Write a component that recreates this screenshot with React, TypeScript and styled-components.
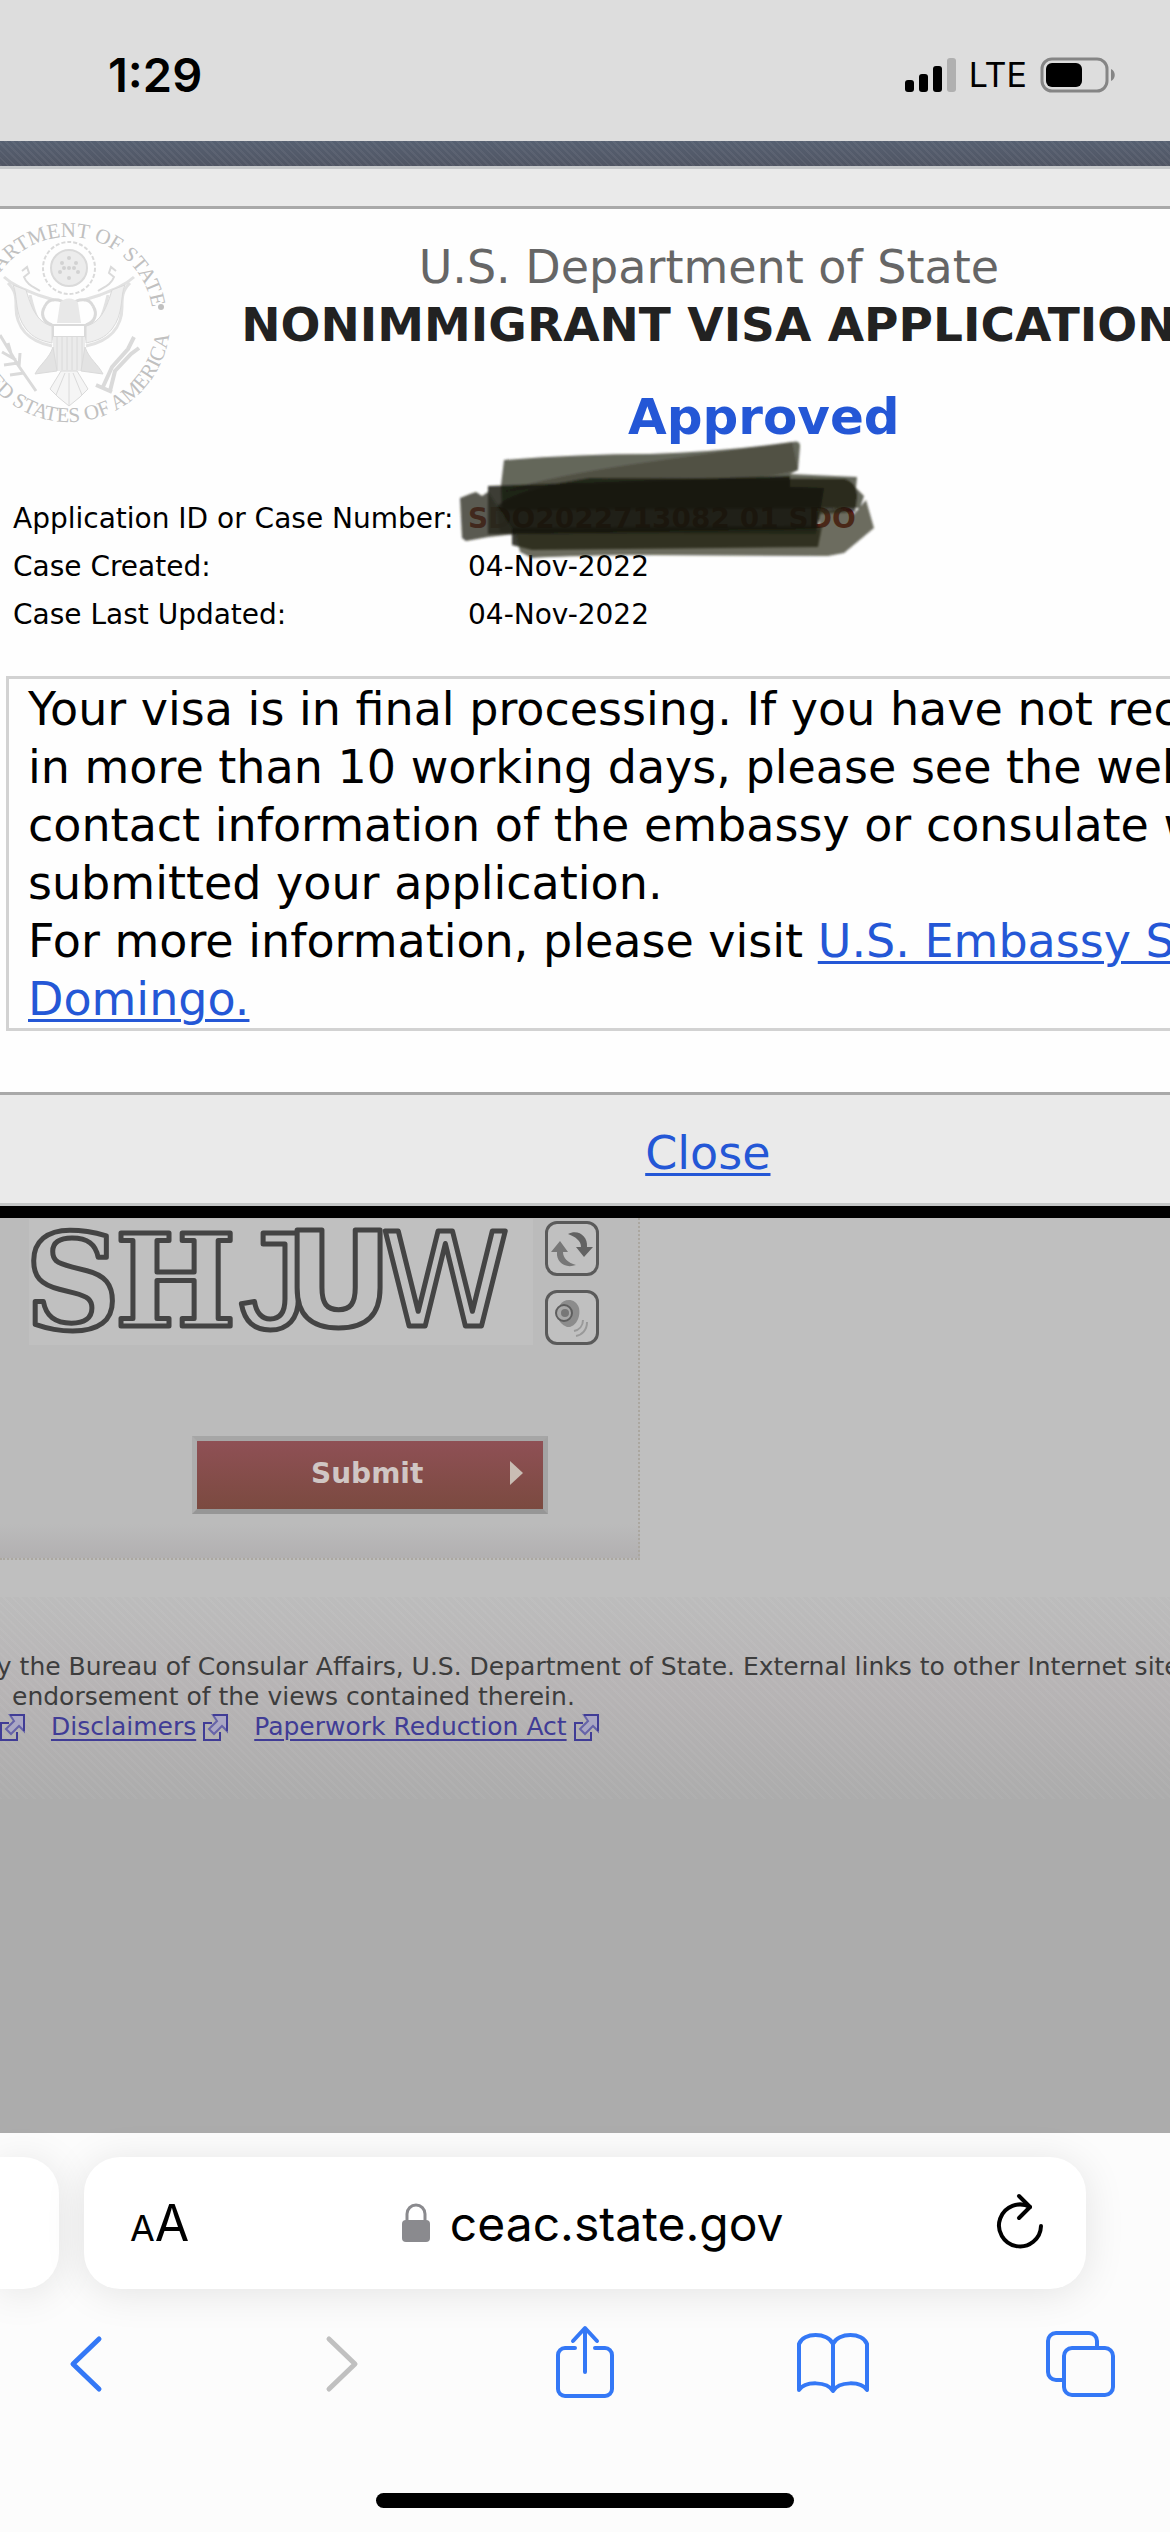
import React from "react";
import styled, { createGlobalStyle } from "styled-components";

const GlobalStyle = createGlobalStyle`
  *, *::before, *::after { box-sizing: border-box; }
  body { margin: 0; background: #acacac; font-family: Verdana, "DejaVu Sans", sans-serif; }
  button { font: inherit; border: 0; padding: 0; background: none; color: inherit; }
`;

const systemFont = `Inter, Roboto, sans-serif`;
const blue = "#2457d6";
const toolBlue = "#3478f6";

const Screen = styled.div`
  min-height: 100vh;
  display: flex;
  flex-direction: column;
  overflow: hidden;
`;

const StatusBar = styled.header`
  display: flex;
  justify-content: space-between;
  align-items: center;
  height: 141px;
  padding: 8px 54px 0 108px;
  background: #dddddd;
  color: #000;
  font-family: ${systemFont};
`;

const Clock = styled.time`
  font-size: 47px;
  font-weight: 600;
`;

const StatusIcons = styled.div`
  display: flex;
  align-items: center;
  gap: 13px;
  font-size: 34px;
`;

const Banner = styled.div`
  height: 25px;
  background:
    repeating-linear-gradient(45deg, rgba(255, 255, 255, 0.05) 0 2px, transparent 2px 5px),
    linear-gradient(#566071, #505563);
`;

const Dialog = styled.section`
  width: 121vw;
  background: #fefefe;
  border-top: 3px solid #c6c8ca;
  border-bottom: 12px solid #000;
`;

const DialogTop = styled.div`
  height: 40px;
  background: #eaeaea;
  border-bottom: 3px solid #a9a9a9;
`;

const DialogBottom = styled.div`
  display: flex;
  justify-content: center;
  align-items: center;
  height: 114px;
  margin-top: 61px;
  padding-top: 8px;
  background: #eaeaea;
  border-top: 3px solid #a9a9a9;
  border-bottom: 3px solid #c4c6c6;
`;

const TextLink = styled.a`
  color: ${blue};
  font-size: ${(p: { $size?: number }) => (p.$size ? p.$size + "px" : "inherit")};
  text-decoration: underline;
  text-decoration-thickness: 3px;
  text-underline-offset: 4px;
`;

const Masthead = styled.div`
  display: flex;
  align-items: flex-start;
  padding-right: 170px;
`;

const SealBox = styled.div`
  flex: none;
  width: 172px;
  height: 205px;
  margin-top: 12px;
`;

const Titles = styled.div`
  flex: 1;
  padding-top: 29px;
  text-align: center;
  white-space: nowrap;
`;

const Agency = styled.p`
  margin: 0;
  font-size: 46px;
  line-height: 58px;
  color: #666;
`;

const Title = styled.h1`
  margin: 0;
  font-size: 47px;
  line-height: 58px;
  color: #222;
`;

const Result = styled.h2`
  margin: 33px 0 0;
  padding-left: 110px;
  font-size: 50px;
  line-height: 60px;
  color: ${blue};
`;

const CaseArea = styled.div`
  position: relative;
  padding: 48px 13px 0;
`;

const CaseTable = styled.table`
  border-collapse: collapse;
  font-size: 28px;
  line-height: 48px;
  color: #000;
  th, td { padding: 0; text-align: left; white-space: nowrap; }
  th { width: 455px; font-weight: 400; }
`;

const CaseNumber = styled.strong`
  color: #8b1a10;
`;

const Scribble = styled.svg`
  position: absolute;
  left: 440px;
  top: -17px;
`;

const Notice = styled.div`
  margin: 37px 6px 0;
  padding: 1px 19px 0;
  border: 3px solid #d2d2d2;
  font-size: 46px;
  line-height: 58px;
  color: #000;
`;

const Line = styled.span`
  display: block;
  white-space: nowrap;
`;

const Page = styled.main`
  background: #bfbfbf;
  padding-bottom: 37px;
`;

const FormPanel = styled.form`
  width: 640px;
  padding: 1px 0 44px 29px;
  background: linear-gradient(#bbbbbb 90%, #b2b0b1);
  border-right: 2px dotted #aba7a0;
  border-bottom: 2px dotted #aba7a0;
`;

const CaptchaRow = styled.div`
  display: flex;
  gap: 12px;
`;

const CaptchaTools = styled.div`
  display: flex;
  flex-direction: column;
  gap: 14px;
  padding-top: 2px;
`;

const CaptchaButton = styled.button`
  display: grid;
  place-items: center;
  width: 54px;
  height: 55px;
  border: 3px solid #5a5a5a;
  border-radius: 12px;
  background: #c0c0c0;
`;

const Submit = styled.button`
  display: flex;
  align-items: center;
  width: 356px;
  height: 78px;
  margin: 91px 0 0 163px;
  padding: 0 20px 4px 114px;
  justify-content: space-between;
  border: 5px solid #adadad;
  border-color: #a6a6a6 #a3a3a3 #969696 #adadad;
  background: linear-gradient(#8f5055, #7b4a40);
  color: #d0c6c4;
  font-size: 28px;
  font-weight: 700;
`;

const SiteFooter = styled.footer`
  padding: 55px 0 57px;
  background:
    repeating-linear-gradient(45deg, rgba(255, 255, 255, 0.04) 0 2px, transparent 2px 6px),
    linear-gradient(#bcbcbc, #b7b4b5 45%, #acacac);
  color: #3d3d3d;
  font-size: 25px;
  line-height: 30px;
`;

const FooterLine = styled.p`
  margin: 0 0 0 ${(p: { $start: number }) => p.$start}px;
  white-space: nowrap;
`;

const FooterLinks = styled.nav`
  display: flex;
  align-items: center;
  gap: 26px;
  height: 30px;
`;

const FooterItem = styled.span`
  display: flex;
  align-items: center;
  gap: 7px;
  a {
    color: #403c96;
    text-decoration-thickness: 2px;
    text-underline-offset: 4px;
  }
`;

const Blank = styled.div`
  flex: 1;
  background: #acacac;
`;

const Browser = styled.section`
  background: #fcfcfc;
  padding-top: 24px;
  font-family: ${systemFont};
`;

const Tabs = styled.div`
  display: flex;
  gap: 25px;
  height: 132px;
  padding-right: 84px;
`;

const NextTab = styled.div`
  width: 59px;
  background: #fff;
  border-radius: 0 36px 36px 0;
  box-shadow: 0 4px 40px rgba(0, 0, 0, 0.1);
`;

const AddressBar = styled.div`
  flex: 1;
  display: flex;
  align-items: center;
  justify-content: space-between;
  padding: 0 42px 0 46px;
  background: #fff;
  border-radius: 36px;
  box-shadow: 0 4px 40px rgba(0, 0, 0, 0.1);
  color: #000;
`;

const TextSize = styled.button`
  font-size: 50px;
  small { font-size: 36px; }
`;

const Address = styled.div`
  display: flex;
  align-items: center;
  gap: 20px;
  font-size: 48px;
`;

const Toolbar = styled.nav`
  display: flex;
  justify-content: space-between;
  padding: 34px 50px 0 46px;
`;

const ToolButton = styled.button`
  display: grid;
  place-items: center;
  width: 80px;
  height: 80px;
`;

const HomeBar = styled.div`
  width: 418px;
  height: 15px;
  margin: 90px auto 24px;
  border-radius: 8px;
  background: #000;
`;

const Seal = () => (
  <svg width="172" height="205" viewBox="0 14 172 205" fill="none" stroke="#dadada" aria-label="Seal of the Department of State">
    <defs>
      <path id="sealTop" d="M-15 114a84 84 0 0 1 168 0" />
      <path id="sealBottom" d="M-32 114a101 101 0 0 0 202 0" />
    </defs>
    <g fill="#c0c0c0" stroke="none" fontFamily="Liberation Serif, serif" fontSize="21" textAnchor="middle">
      <text><textPath href="#sealTop" startOffset="50%">DEPARTMENT OF STATE</textPath></text>
      <text><textPath href="#sealBottom" startOffset="50%">UNITED STATES OF AMERICA</textPath></text>
      <circle cx="161" cy="100" r="3" />
    </g>
    <circle cx="69" cy="61" r="26" strokeWidth="2" strokeDasharray="4 2" />
    <circle cx="69" cy="61" r="18" fill="#ececec" strokeWidth="2" />
    <g fill="#d2d2d2" stroke="none">
      {[[69, 51], [62, 56], [76, 56], [69, 61], [60, 65], [78, 65], [69, 71], [64, 61], [74, 61]].map(([x, y]) => (
        <circle key={x + "-" + y} cx={x} cy={y} r="2" />
      ))}
    </g>
    <path d="M4 70c10 9 21 13 34 18l16 5M134 70c-10 9-21 13-34 18l-16 5M8 76c8 8 8 14 8 24 0 20 12 34 36 39M130 76c-8 8-8 14-8 24 0 20-12 34-36 39M22 84c6 24 10 42 31 48M116 84c-6 24-10 42-31 48M30 88c5 22 10 34 23 38M108 88c-5 22-10 34-23 38" strokeWidth="3" stroke="#e2e2e2" />
    <path d="M13 78c5 10 1 29 13 44 7 9 16 12 26 14V119c-16-4-21-20-26-36zM125 78c-5 10-1 29-13 44-7 9-16 12-26 14V119c16-4 21-20 26-36z" fill="#efefef" />
    <path d="M22 64l5-4 2 6-5 4c3 8 10 10 16 14M116 64l-5-4-2 6 5 4c-3 8-10 10-16 14" strokeWidth="2" />
    <path d="M45 99c4-9 16-7 21-2M93 99c-4-9-16-7-21-2M45 99c-5 8-2 16 7 19M93 99c5 8 2 16-7 19" strokeWidth="3" />
    <path d="M60 96c3-6 15-6 18 0l3 20H57z" fill="#e8e8e8" stroke="none" />
    <path d="M53 118h32v12H53z" strokeWidth="2" fill="#fff" />
    <path d="M53 130h32v34H53z" fill="#ebebeb" stroke="none" />
    <path d="M57 130v33M62 130v33M67 130v33M72 130v33M77 130v33M82 130v33" />
    <path d="M53 140c-4 12-13 17-18 27l22-3zM85 140c4 12 13 17 18 27l-22-3z" fill="#e3e3e3" />
    <path d="M61 164l-11 18 8 8 11 9 11-9 8-8-11-18zM65 166l-9 22M69 166v32M73 166l9 22" fill="#f5f5f5" />
    <path d="M102 182l10-22 16-18 6-12M110 184l5-20 16-17 8-6M96 178l16 7" strokeWidth="4" />
    <path d="M0 128l18 30 18 26M2 145l14 8M4 158l14-2M8 136l4 14M20 146l-1 14M10 168l14-2" strokeWidth="3" />
  </svg>
);

const CaptchaImage = () => (
  <svg width="504" height="126" viewBox="0 0 504 126" role="img" aria-label="Verification code SHJUW">
    <rect width="504" height="126" fill="#c0c0c0" />
    <g fill="#c0c0c0" stroke="#444" strokeWidth="5" strokeLinejoin="round">
      <text x="-4" y="110" fontSize="132" fontWeight="700" fontFamily="DejaVu Serif, serif">S</text>
      <text x="86" y="107" fontSize="128" fontWeight="700" fontFamily="DejaVu Serif, serif">H</text>
      <text x="200" y="110" fontSize="144" fontFamily="Liberation Mono, monospace">J</text>
      <text x="256" y="107" fontSize="132" fontWeight="700" fontFamily="DejaVu Sans, sans-serif">U</text>
      <text x="352" y="107" fontSize="130" fontFamily="DejaVu Sans, sans-serif">W</text>
    </g>
  </svg>
);

const ExternalIcon = () => (
  <svg width="25" height="27" viewBox="0 0 25 27" fill="none" stroke="#403c96" strokeWidth="2" aria-hidden="true">
    <path d="M9 9H1v17h16v-8" />
    <path d="M10 1h14v16l-5-5-8 8-5-5 8-8z" fill="#aaa7c4" stroke="#6663a8" />
    <path d="M10 1h14v16" />
  </svg>
);

export default function App() {
  return (
    <Screen>
      <GlobalStyle />
      <StatusBar>
        <Clock>1:29</Clock>
        <StatusIcons>
          <svg width="51" height="34" viewBox="0 0 51 34" aria-label="Signal">
            <rect y="22" width="9" height="12" rx="3" />
            <rect x="14" y="16" width="9" height="18" rx="3" />
            <rect x="28" y="8" width="9" height="26" rx="3" />
            <rect x="42" width="9" height="34" rx="3" fill="#b0b0b0" />
          </svg>
          LTE
          <svg width="76" height="36" viewBox="0 0 76 36" aria-label="Battery">
            <rect x="2" y="2" width="65" height="32" rx="10" fill="none" stroke="#858585" strokeWidth="3" />
            <rect x="6" y="6" width="36" height="24" rx="6" />
            <path d="M71 12c5 2 5 10 0 12z" fill="#858585" />
          </svg>
        </StatusIcons>
      </StatusBar>
      <Banner />

      <Dialog>
        <DialogTop />
        <Masthead>
          <SealBox><Seal /></SealBox>
          <Titles>
            <Agency>U.S. Department of State</Agency>
            <Title>NONIMMIGRANT VISA APPLICATION</Title>
            <Result>Approved</Result>
          </Titles>
        </Masthead>
        <CaseArea>
          <CaseTable>
            <tbody>
              <tr><th scope="row">Application ID or Case Number:</th><td><CaseNumber>SDO2022713082 01 SDO</CaseNumber></td></tr>
              <tr><th scope="row">Case Created:</th><td>04-Nov-2022</td></tr>
              <tr><th scope="row">Case Last Updated:</th><td>04-Nov-2022</td></tr>
            </tbody>
          </CaseTable>
          <Scribble width="450" height="140" viewBox="0 0 450 140" aria-hidden="true">
            <defs>
              <filter id="soft"><feGaussianBlur stdDeviation="1" /></filter>
            </defs>
            <g filter="url(#soft)" fill="#14150a">
              <path d="M64 30Q140 24 210 24Q280 22 352 12Q360 10 360 16L358 40L350 44L417 47L416 58L424 66L420 78L62 80L61 55z" fill="#3a3b2c" fillOpacity=".78" />
              <path d="M202 33L352 12L358 40L340 44L300 50L150 52L62 62Q110 46 202 33z" fillOpacity=".25" />
              <path d="M48 56L350 46L350 57L384 58L380 82L376 104L48 104z" fillOpacity=".84" />
              <path d="M56 78Q70 60 150 48L405 49Q418 54 417 68L415 82L380 84L376 104L60 102z" fillOpacity=".72" />
              <path d="M20 68L30 64L36 62L42 66L48 62L76 104L48 107L26 111L22 108z" fill="#2c2d20" fillOpacity=".78" />
              <path d="M72 98L382 96L378 117L92 120L72 115z" fillOpacity=".84" />
              <path d="M76 104L380 99L378 78L390 80L398 78L414 84L426 70L434 98L404 123L388 126L190 125Q120 126 92 128L80 122z" fill="#2c2d20" fillOpacity=".7" />
            </g>
          </Scribble>
        </CaseArea>
        <Notice>
          <Line>Your visa is in final processing. If you have not received it</Line>
          <Line>in more than 10 working days, please see the webpage for</Line>
          <Line>contact information of the embassy or consulate where you</Line>
          <Line>submitted your application.</Line>
          <Line>
            For more information, please visit{" "}
            <TextLink href="#embassy">U.S. Embassy Santo<br />Domingo.</TextLink>
          </Line>
        </Notice>
        <DialogBottom>
          <TextLink href="#close" $size={46}>Close</TextLink>
        </DialogBottom>
      </Dialog>

      <Page>
        <FormPanel>
          <CaptchaRow>
            <CaptchaImage />
            <CaptchaTools>
              <CaptchaButton type="button" aria-label="New code">
                <svg width="44" height="40" viewBox="0 0 44 40" fill="#626262">
                  <path d="M18 5c10-5 20 2 19 13h6l-9 10-8-10h5c0-6-5-10-13-13z" />
                  <path d="M26 36c-11 4-20-3-19-13H1l9-11 8 11h-5c0 6 5 11 13 13z" fill="#777" />
                </svg>
              </CaptchaButton>
              <CaptchaButton type="button" aria-label="Listen to code">
                <svg width="40" height="44" viewBox="0 0 40 44" fill="none">
                  <path d="M8 9C12 2 24 2 27 12c2 10-4 20-12 19C5 27 3 17 8 9z" fill="#8c8c8c" />
                  <circle cx="12" cy="17" r="8" fill="#a8a8a8" stroke="#5e5e5e" strokeWidth="2" />
                  <circle cx="13" cy="17" r="4" fill="#777" />
                  <path d="M31 24c0 6-4 10-9 11M35 26c0 8-5 13-11 14" stroke="#999" strokeWidth="2" />
                </svg>
              </CaptchaButton>
            </CaptchaTools>
          </CaptchaRow>
          <Submit type="button">
            Submit
            <svg width="13" height="24" viewBox="0 0 13 24" fill="#c9bdb4" aria-hidden="true"><path d="M0 0l13 12L0 24z" /></svg>
          </Submit>
        </FormPanel>
      </Page>

      <SiteFooter>
        <FooterLine $start={-19}>
          by the Bureau of Consular Affairs, U.S. Department of State. External links to other Internet sites
        </FooterLine>
        <FooterLine $start={12}>endorsement of the views contained therein.</FooterLine>
        <FooterLinks>
          <ExternalIcon />
          <FooterItem><a href="#disclaimers">Disclaimers</a><ExternalIcon /></FooterItem>
          <FooterItem><a href="#paperwork">Paperwork Reduction Act</a><ExternalIcon /></FooterItem>
        </FooterLinks>
      </SiteFooter>
      <Blank />

      <Browser>
        <Tabs>
          <NextTab />
          <AddressBar>
            <TextSize type="button" aria-label="Text size"><small>A</small>A</TextSize>
            <Address>
              <svg width="28" height="40" viewBox="0 0 28 40" aria-hidden="true">
                <path d="M5 18V11a9 9 0 0 1 18 0v7" fill="none" stroke="#8a8a8e" strokeWidth="3" />
                <rect y="17" width="28" height="22" rx="4" fill="#8a8a8e" />
              </svg>
              ceac.state.gov
            </Address>
            <button type="button" aria-label="Reload">
              <svg width="48" height="56" viewBox="0 0 48 56" fill="none" stroke="#000" strokeWidth="4" strokeLinecap="round" strokeLinejoin="round">
                <path d="M34 14A21 21 0 1 0 45 33" />
                <path d="M23 3l11 11-11 11" />
              </svg>
            </button>
          </AddressBar>
        </Tabs>
        <Toolbar>
          <ToolButton type="button" aria-label="Back">
            <svg width="80" height="80" viewBox="0 0 80 80" fill="none" stroke={toolBlue} strokeWidth="5" strokeLinecap="round" strokeLinejoin="round">
              <path d="M53 16L27 41l26 25" />
            </svg>
          </ToolButton>
          <ToolButton type="button" aria-label="Forward" disabled>
            <svg width="80" height="80" viewBox="0 0 80 80" fill="none" stroke="#c0c0c0" strokeWidth="5" strokeLinecap="round" strokeLinejoin="round">
              <path d="M34 16l26 25-26 25" />
            </svg>
          </ToolButton>
          <ToolButton type="button" aria-label="Share">
            <svg width="80" height="80" viewBox="0 0 80 80" fill="none" stroke={toolBlue} strokeWidth="4" strokeLinecap="round" strokeLinejoin="round">
              <path d="M32 25H22a7 7 0 0 0-7 7v34a7 7 0 0 0 7 7h40a7 7 0 0 0 7-7V32a7 7 0 0 0-7-7H52" />
              <path d="M42 49V6M30 18L42 5l12 13" />
            </svg>
          </ToolButton>
          <ToolButton type="button" aria-label="Bookmarks">
            <svg width="80" height="80" viewBox="0 0 80 80" fill="none" stroke={toolBlue} strokeWidth="4" strokeLinecap="round" strokeLinejoin="round">
              <path d="M41 21C36 9 11 9 7 21v46c6-9 28-9 34 1 6-10 28-10 34-1V21C71 9 46 9 41 21zM41 21v46" />
            </svg>
          </ToolButton>
          <ToolButton type="button" aria-label="Tabs">
            <svg width="80" height="80" viewBox="0 0 80 80" fill="none" stroke={toolBlue} strokeWidth="4" strokeLinejoin="round">
              <rect x="24" y="25" width="49" height="47" rx="8" />
              <path d="M24 57h-8a8 8 0 0 1-8-8V18a8 8 0 0 1 8-8h33a8 8 0 0 1 8 8v7" />
            </svg>
          </ToolButton>
        </Toolbar>
        <HomeBar />
      </Browser>
    </Screen>
  );
}
